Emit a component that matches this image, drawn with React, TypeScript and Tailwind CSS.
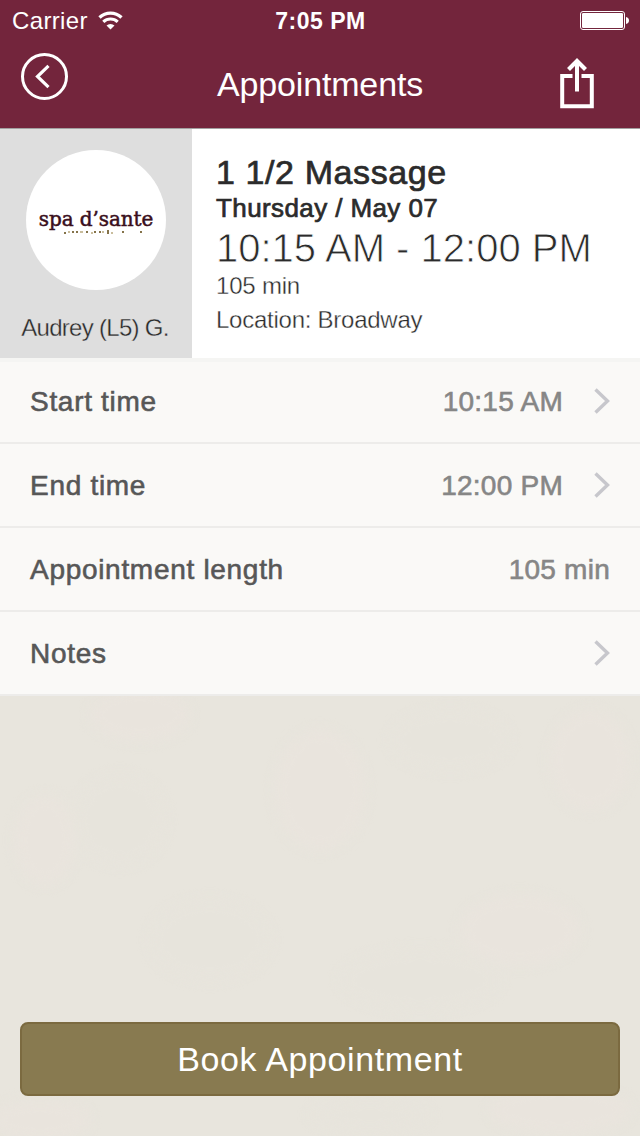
type Row = { label: string; value?: string; chevron?: boolean };

const rows: Row[] = [
  { label: "Start time", value: "10:15 AM", chevron: true },
  { label: "End time", value: "12:00 PM", chevron: true },
  { label: "Appointment length", value: "105 min" },
  { label: "Notes", chevron: true },
];

function WifiIcon() {
  return (
    <svg width="26" height="20" viewBox="0 0 26 20" fill="none" stroke="white">
      <path d="M1.500 6.400a16.200 16.200 0 0 1 22 0" strokeWidth="3.400" />
      <path d="M5.300 10.800a10.600 10.600 0 0 1 14.400 0" strokeWidth="3.200" />
      <path d="M12.500 18.500 8.500 14.500a5.800 5.800 0 0 1 8 0z" fill="white" stroke="none" />
    </svg>
  );
}

function BatteryIcon() {
  return (
    <svg className="mt-px" width="50" height="20" viewBox="0 0 50 20">
      <rect x="0.5" y="0.5" width="44" height="18" rx="2.5" fill="none" stroke="white" />
      <rect x="2" y="2" width="41" height="15" rx="1.2" fill="white" />
      <path d="M46 6c2 .4 3 1.700 3 3.500s-1 3.100-3 3.500z" fill="white" />
    </svg>
  );
}

function BackIcon() {
  return (
    <svg width="48" height="48" viewBox="0 0 48 48" fill="none" stroke="white" strokeWidth="3">
      <circle cx="23.500" cy="23.500" r="22" />
      <path d="M27.500 12.800 16.500 23.500 27.500 34.200" strokeWidth="3.200" />
    </svg>
  );
}

function ShareIcon() {
  return (
    <svg width="34" height="52" viewBox="0 0 34 52" fill="none" stroke="white" strokeWidth="4">
      <path d="M12.500 18H2.200v30.300h29.600V18H21.500" />
      <path d="M17 33.500V3" />
      <path d="m8.500 11.500 8.500-8.500 8.500 8.500" strokeWidth="4.200" />
    </svg>
  );
}

function Chevron() {
  return (
    <svg className="ml-[31px]" width="16" height="26" viewBox="0 0 16 26" fill="none" stroke="#c7c7cc" strokeWidth="3.400">
      <path d="m1.500 1.500 12 11.500-12 11.500" />
    </svg>
  );
}

// soft paper-like blotches behind the whole page
function PaperTexture() {
  return (
    <svg className="absolute inset-0 -z-10" width="640" height="1136">
      <filter id="soft" colorInterpolationFilters="sRGB">
        <feGaussianBlur stdDeviation="6" />
      </filter>
      <g filter="url(#soft)">
        <g fill="#e9e4dd">
          <ellipse cx="140" cy="715" rx="50" ry="26" />
          <ellipse cx="320" cy="790" rx="45" ry="60" />
          <ellipse cx="45" cy="840" rx="30" ry="45" />
          <ellipse cx="520" cy="930" rx="60" ry="35" />
          <ellipse cx="590" cy="760" rx="40" ry="50" />
          <ellipse cx="560" cy="1110" rx="70" ry="24" />
          <ellipse cx="40" cy="1120" rx="50" ry="20" />
        </g>
        <g fill="#e7e4dc">
          <ellipse cx="120" cy="820" rx="45" ry="45" />
          <ellipse cx="450" cy="740" rx="60" ry="30" />
          <ellipse cx="420" cy="980" rx="80" ry="30" />
          <ellipse cx="210" cy="940" rx="60" ry="40" />
          <ellipse cx="370" cy="1115" rx="60" ry="16" />
        </g>
      </g>
    </svg>
  );
}

function SpaLogo() {
  return (
    <div className="flex flex-col items-center justify-center w-[140px] h-[140px] pt-[3px] rounded-full bg-white">
      <span className="font-['DejaVu_Serif'] text-[20px] leading-[22px] tracking-[-0.1px] text-[#3a0f1c] whitespace-nowrap [-webkit-text-stroke:0.5px_#3a0f1c]">
        spa d’sante
      </span>
      <svg width="116" height="6" viewBox="0 0 116 6" fill="#a8986c">
        <path d="M26 2h2v2h-2zM34 1h2v2h-2zM38 1h2v2h-2zM48 1h2v2h-2zM56 1h2v2h-2zM61 1h2v2h-2zM69 0h2v4h-2zM84 1h2v2h-2zM102 1h2v2h-2z" fill="#85734a" />
        <path d="M30 1h2v2h-2zM42 1h3v2h-3zM53 2h2v2h-2zM64 1h2v2h-2zM73 2h2v2h-2z" fill="#c9bd9c" />
      </svg>
    </div>
  );
}

function Header() {
  return (
    <div className="h-[128px] bg-[#73253c] text-white">
      <div className="grid grid-cols-3 items-center h-[40px] pl-3 pr-[10px] text-2xl leading-[40px]">
        <div className="flex items-center gap-[10px]">
          <span className="pt-px tracking-[0.35px]">Carrier</span>
          <WifiIcon />
        </div>
        <span className="pt-px pr-px text-center text-[23px] font-bold tracking-[0.5px]">7:05 PM</span>
        <div className="flex justify-end">
          <BatteryIcon />
        </div>
      </div>
      <div className="flex justify-between h-[88px] pl-[21px] pr-[46px]">
        <div className="pt-[13px]">
          <BackIcon />
        </div>
        <span className="pt-[24px] pl-[11px] text-[34px] leading-[40px] tracking-[-0.15px]">
          Appointments
        </span>
        <div className="pt-[18px]">
          <ShareIcon />
        </div>
      </div>
    </div>
  );
}

function Summary() {
  return (
    <div className="flex h-[230px] bg-white text-[#2b2b2b] border-t border-[#a3a0a1]">
      <div className="flex flex-col items-center w-[192px] pt-[21px] bg-[#dedede]">
        <SpaLogo />
        <span className="pt-[23px] pr-[2px] text-2xl leading-[30px] tracking-[-0.7px] whitespace-nowrap [-webkit-text-stroke:0.35px_#dedede]">
          Audrey (L5) G.
        </span>
      </div>
      <div className="flex flex-col items-start pl-6 pt-[22px] whitespace-nowrap">
        <span className="text-[34px] leading-[42px] tracking-[0.6px] [-webkit-text-stroke:0.7px_#2b2b2b]">
          1 1/2 Massage
        </span>
        <span className="text-[26px] leading-[30px] tracking-[0.4px] [-webkit-text-stroke:0.7px_#2b2b2b]">
          Thursday / May 07
        </span>
        <span className="text-[40px] leading-[50px] [-webkit-text-stroke:0.8px_white]">
          10:15 AM - 12:00 PM
        </span>
        <span className="text-2xl leading-[26px] tracking-[-0.2px] [-webkit-text-stroke:0.35px_white]">
          105 min
        </span>
        <span className="pt-[6px] text-2xl leading-[30px] tracking-[-0.25px] [-webkit-text-stroke:0.35px_white]">
          Location: Broadway
        </span>
      </div>
    </div>
  );
}

export default function App() {
  return (
    <div className="relative isolate flex flex-col w-[640px] h-[1136px] bg-[#e8e5dd] font-['Liberation_Sans',Arial,sans-serif] overflow-hidden">
      <PaperTexture />
      <Header />
      <Summary />
      <div className="flex flex-col border-t-4 border-[#f5f5f3] bg-[#faf9f7]">
        {rows.map((row) => (
          <div
            key={row.label}
            className="flex items-center h-[84px] first:h-[82px] first:pb-[2px] px-[30px] border-b-2 border-[#edecea] text-[28px]"
          >
            <span className="flex-1 pt-[2px] text-[#575757] tracking-[0.7px] [-webkit-text-stroke:0.6px_#575757]">
              {row.label}
            </span>
            {row.value && (
              <span className="pt-[2px] text-[#868686] tracking-[0.25px] [-webkit-text-stroke:0.6px_#868686]">
                {row.value}
              </span>
            )}
            {row.chevron && <Chevron />}
          </div>
        ))}
      </div>
      <button className="mt-auto mx-5 mb-10 h-[74px] rounded-lg border-2 border-[#7b6a40] bg-[#887a50] text-white text-[34px] tracking-[0.6px]">
        Book Appointment
      </button>
    </div>
  );
}
